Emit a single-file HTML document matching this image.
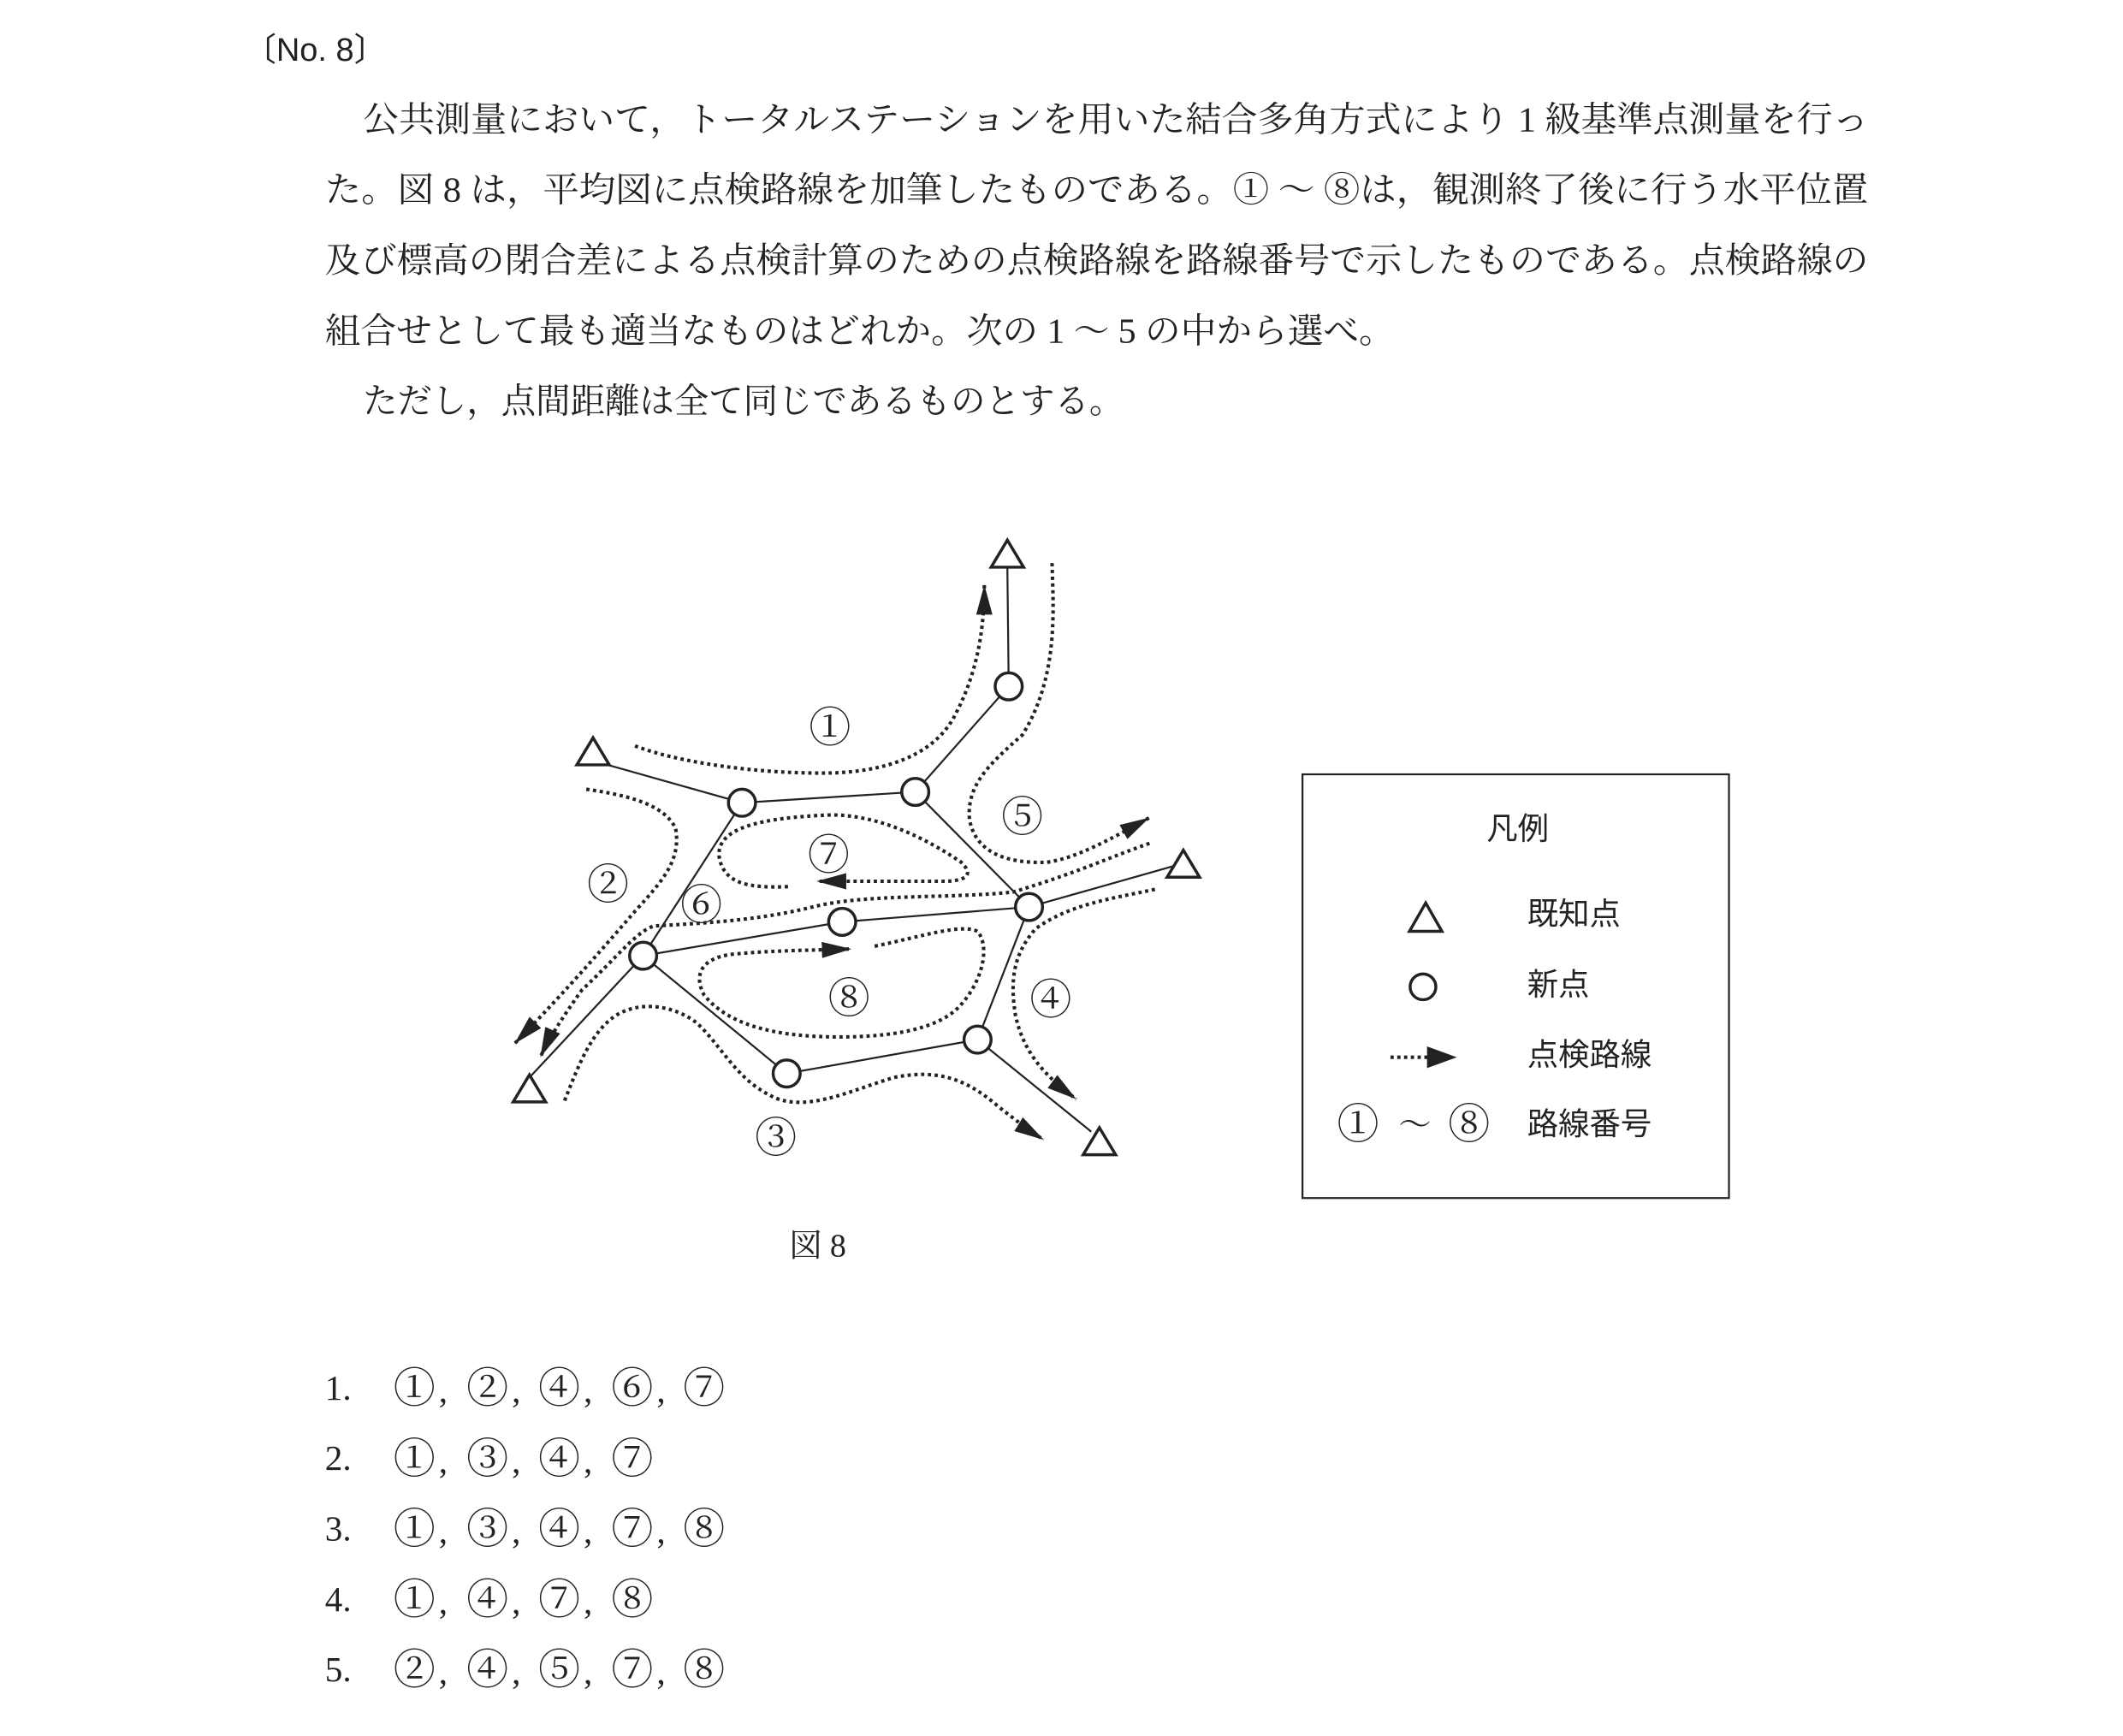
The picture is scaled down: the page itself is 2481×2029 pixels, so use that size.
<!DOCTYPE html>
<html><head><meta charset="utf-8"><style>
html,body{margin:0;padding:0;background:#fff;}
svg{display:block;}
.m{font-family:"Liberation Serif","Noto Serif CJK JP","Noto Serif CJK SC",serif;fill:#222;}
.g{font-family:"Liberation Sans","Noto Sans CJK JP",sans-serif;fill:#222;}
.d{fill:none;stroke:#222;stroke-width:2.6;stroke-dasharray:2.4 2.6;stroke-linejoin:round;}
.s{fill:none;stroke:#222;stroke-width:1.4;}
.c{fill:#fff;stroke:#222;stroke-width:2.2;}
.t{fill:#fff;stroke:#222;stroke-width:2.2;}
</style></head><body>
<svg width="2481" height="2029" viewBox="0 0 1568 1282.4" xmlns="http://www.w3.org/2000/svg">
<defs>
<marker id="a" markerUnits="userSpaceOnUse" markerWidth="24" markerHeight="14" refX="22" refY="6" orient="auto"><path d="M0,0 L22,6 L0,12 Z" fill="#222"/></marker>
</defs>
<text class="g" x="180" y="45" font-size="24">〔No. 8〕</text>
<text class="m" x="268" y="97" font-size="26" textLength="1112" lengthAdjust="spacingAndGlyphs">公共測量において，トータルステーションを用いた結合多角方式により 1 級基準点測量を行っ</text>
<text class="m" x="240" y="149" font-size="26" textLength="1140" lengthAdjust="spacingAndGlyphs">た。図 8 は，平均図に点検路線を加筆したものである。① ～ ⑧は，観測終了後に行う水平位置</text>
<text class="m" x="240" y="201" font-size="26" textLength="1140" lengthAdjust="spacingAndGlyphs">及び標高の閉合差による点検計算のための点検路線を路線番号で示したものである。点検路線の</text>
<text class="m" x="240" y="253" font-size="26" textLength="790" lengthAdjust="spacingAndGlyphs">組合せとして最も適当なものはどれか。次の 1 ～ 5 の中から選べ。</text>
<text class="m" x="268" y="305" font-size="26" textLength="562" lengthAdjust="spacingAndGlyphs">ただし，点間距離は全て同じであるものとする。</text>

<g class="s">
<polyline points="744,418 745,507"/>
<polyline points="745,507 676,585 548,593 438,562"/>
<polyline points="548,593 475,706 391,796"/>
<polyline points="676,585 760,670 866,640"/>
<polyline points="760,670 622,681 475,706 581,793 722,768 760,670"/>
<polyline points="722,768 806,836"/>
</g>
<path class="d" marker-end="url(#a)" d="M469,551 C500,563 560,572 614,571 C650,570 690,560 706,527 C720,500 727,470 727,432"/>
<path class="d" marker-end="url(#a)" d="M777,416 C778,450 782,500 755,543 C730,565 714,580 716,605 C720,628 740,638 773,637 C795,634 820,620 849,604"/>
<path class="d" marker-end="url(#a)" d="M849,623 C820,633 795,645 748,659 C700,664 640,660 600,670 C560,680 520,682 483,684 C470,688 455,708 430,731 C415,752 405,768 399,781"/>
<path class="d" marker-end="url(#a)" d="M433,583 C460,587 490,593 499,612 C503,635 490,650 470,672 C450,695 420,730 380,771"/>
<path class="d" marker-end="url(#a)" d="M582,655 C555,656 534,654 531,632 C530,612 560,604 614,602 C650,602 685,620 710,637 C718,645 716,650 700,651 L603,651"/>
<path class="d" marker-end="url(#a)" d="M646,699 C680,692 710,682 722,688 C732,700 725,728 706,746 C690,760 660,766 620,766 C580,766 540,760 520,735 C512,720 518,708 540,705 C570,702 600,702 629,701"/>
<path class="d" marker-end="url(#a)" d="M853,657 C820,664 790,668 765,686 C748,705 746,725 750,750 C756,778 772,795 795,812"/>
<path class="d" marker-end="url(#a)" d="M417,813 C428,785 437,762 455,750 C475,738 500,744 515,756 C535,775 545,800 575,812 C600,820 630,805 660,796 C690,790 712,795 738,818 C750,827 758,834 771,842"/>
<g class="c">
<circle cx="745" cy="507" r="10"/><circle cx="548" cy="593" r="10"/><circle cx="676" cy="585" r="10"/>
<circle cx="760" cy="670" r="10"/><circle cx="622" cy="681" r="10"/><circle cx="475" cy="706" r="10"/>
<circle cx="722" cy="768" r="10"/><circle cx="581" cy="793" r="10"/>
</g>
<g class="t">
<polygon points="744,399 756,419 732,419"/>
<polygon points="438,545 450,565 426,565"/>
<polygon points="874,628 886,648 862,648"/>
<polygon points="391,794 403,814 379,814"/>
<polygon points="812,833 824,853 800,853"/>
</g>
<g class="m" font-size="31" text-anchor="middle">
<text x="613" y="548">①</text><text x="449" y="664">②</text><text x="573" y="851">③</text>
<text x="776" y="749">④</text><text x="755" y="614">⑤</text><text x="518" y="679">⑥</text>
<text x="612" y="642">⑦</text><text x="627" y="748">⑧</text>
</g>
<text class="m" x="583" y="928" font-size="24">図 8</text>

<rect x="962" y="572" width="315" height="313" fill="none" stroke="#222" stroke-width="1.4"/>
<g class="g" font-size="23">
<text x="1098" y="620">凡例</text>
<text x="1128" y="683">既知点</text>
<text x="1128" y="735">新点</text>
<text x="1128" y="787">点検路線</text>
<text x="1128" y="838">路線番号</text>
</g>
<polygon class="t" points="1053,667 1065,688 1041,688"/>
<circle class="c" cx="1051" cy="729" r="9.5"/>
<path class="d" d="M1027,781 L1056,781"/>
<path d="M1054,773 L1076,781 L1054,789 Z" fill="#222"/>
<g class="m" font-size="31" text-anchor="middle">
<text x="1003" y="841">①</text><text x="1045" y="839" font-size="24">～</text><text x="1085" y="841">⑧</text>
</g>

<g class="m" font-size="26">
<text x="240" y="1034">1.</text>
<text x="240" y="1086">2.</text>
<text x="240" y="1138">3.</text>
<text x="240" y="1190">4.</text>
<text x="240" y="1242">5.</text>
</g>
<g class="m" font-size="31" text-anchor="middle">
<text x="306" y="1036">①</text><text x="360" y="1036">②</text><text x="413" y="1036">④</text><text x="467" y="1036">⑥</text><text x="520" y="1036">⑦</text>
<text x="306" y="1088">①</text><text x="360" y="1088">③</text><text x="413" y="1088">④</text><text x="467" y="1088">⑦</text>
<text x="306" y="1140">①</text><text x="360" y="1140">③</text><text x="413" y="1140">④</text><text x="467" y="1140">⑦</text><text x="520" y="1140">⑧</text>
<text x="306" y="1192">①</text><text x="360" y="1192">④</text><text x="413" y="1192">⑦</text><text x="467" y="1192">⑧</text>
<text x="306" y="1244">②</text><text x="360" y="1244">④</text><text x="413" y="1244">⑤</text><text x="467" y="1244">⑦</text><text x="520" y="1244">⑧</text>
</g>
<g class="m" font-size="26">
<text x="324" y="1036">,</text><text x="378" y="1036">,</text><text x="431" y="1036">,</text><text x="485" y="1036">,</text>
<text x="324" y="1088">,</text><text x="378" y="1088">,</text><text x="431" y="1088">,</text>
<text x="324" y="1140">,</text><text x="378" y="1140">,</text><text x="431" y="1140">,</text><text x="485" y="1140">,</text>
<text x="324" y="1192">,</text><text x="378" y="1192">,</text><text x="431" y="1192">,</text>
<text x="324" y="1244">,</text><text x="378" y="1244">,</text><text x="431" y="1244">,</text><text x="485" y="1244">,</text>
</g>
</svg>
</body></html>
